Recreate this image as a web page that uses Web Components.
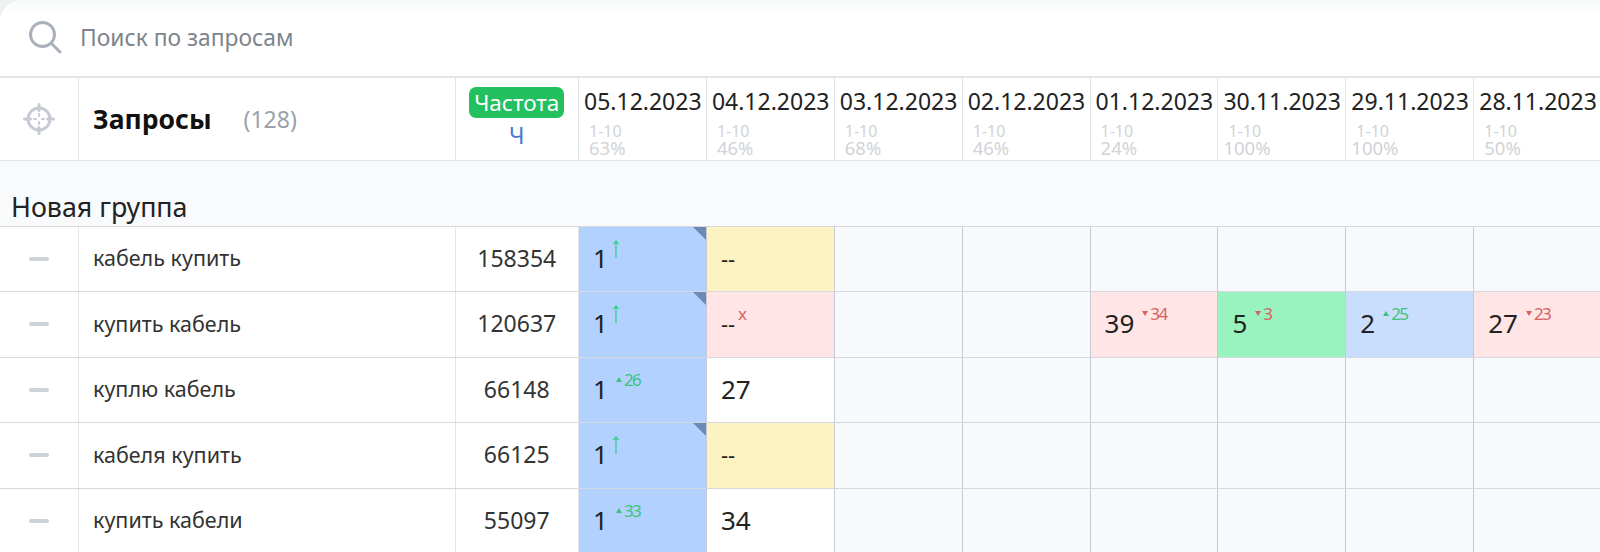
<!DOCTYPE html>
<html lang="ru">
<head>
<meta charset="utf-8">
<title>Запросы</title>
<style>
  html,body{margin:0;height:100%;overflow:hidden;background:#eef1f2}
  body{font-family:"Noto Sans","Open Sans",sans-serif;color:#222}
</style>
</head>
<body>
<rank-page>
  <search-bar placeholder="Поиск по запросам"></search-bar>
  <table-head count="128">
    <date-head date="05.12.2023" pct="63%"></date-head>
    <date-head date="04.12.2023" pct="46%"></date-head>
    <date-head date="03.12.2023" pct="68%"></date-head>
    <date-head date="02.12.2023" pct="46%"></date-head>
    <date-head date="01.12.2023" pct="24%"></date-head>
    <date-head date="30.11.2023" pct="100%"></date-head>
    <date-head date="29.11.2023" pct="100%"></date-head>
    <date-head date="28.11.2023" pct="50%"></date-head>
  </table-head>
  <group-row name="Новая группа"></group-row>
  <query-row name="кабель купить" freq="158354">
    <pos-cell tone="blue" value="1" kind="arrow" flag></pos-cell>
    <pos-cell tone="yellow" value="--"></pos-cell>
    <pos-cell></pos-cell><pos-cell></pos-cell><pos-cell></pos-cell><pos-cell></pos-cell><pos-cell></pos-cell><pos-cell></pos-cell>
  </query-row>
  <query-row name="купить кабель" freq="120637">
    <pos-cell tone="blue" value="1" kind="arrow" flag></pos-cell>
    <pos-cell tone="pink" value="--" kind="x"></pos-cell>
    <pos-cell></pos-cell><pos-cell></pos-cell>
    <pos-cell tone="pink" value="39" kind="down" delta="34"></pos-cell>
    <pos-cell tone="green" value="5" kind="down" delta="3"></pos-cell>
    <pos-cell tone="sky" value="2" kind="up" delta="25"></pos-cell>
    <pos-cell tone="pink" value="27" kind="down" delta="23"></pos-cell>
  </query-row>
  <query-row name="куплю кабель" freq="66148">
    <pos-cell tone="blue" value="1" kind="up" delta="26"></pos-cell>
    <pos-cell tone="white" value="27"></pos-cell>
    <pos-cell></pos-cell><pos-cell></pos-cell><pos-cell></pos-cell><pos-cell></pos-cell><pos-cell></pos-cell><pos-cell></pos-cell>
  </query-row>
  <query-row name="кабеля купить" freq="66125">
    <pos-cell tone="blue" value="1" kind="arrow" flag></pos-cell>
    <pos-cell tone="yellow" value="--"></pos-cell>
    <pos-cell></pos-cell><pos-cell></pos-cell><pos-cell></pos-cell><pos-cell></pos-cell><pos-cell></pos-cell><pos-cell></pos-cell>
  </query-row>
  <query-row name="купить кабели" freq="55097">
    <pos-cell tone="blue" value="1" kind="up" delta="33"></pos-cell>
    <pos-cell tone="white" value="34"></pos-cell>
    <pos-cell></pos-cell><pos-cell></pos-cell><pos-cell></pos-cell><pos-cell></pos-cell><pos-cell></pos-cell><pos-cell></pos-cell>
  </query-row>
</rank-page>
<script>
const COLS = "79px 376.5px 123.5px repeat(8,127.9px)";

class RankPage extends HTMLElement {
  constructor() {
    super();
    this.attachShadow({ mode: "open" }).innerHTML = `
      <style>
        :host{display:block;width:1600px;height:552px;overflow:hidden;background:#fff;border-top-left-radius:22px;font-family:"Noto Sans","Open Sans",sans-serif}
      </style>
      <slot></slot>`;
  }
}

class SearchBar extends HTMLElement {
  connectedCallback() {
    this.attachShadow({ mode: "open" }).innerHTML = `
      <style>
        :host{display:flex;align-items:center;height:76px;box-sizing:border-box;padding:0 0 2px 28px;background:linear-gradient(#f6fbfa,#fff 14px)}
        svg{width:34px;height:34px;flex:none;margin-right:18px}
        span{font-size:22.8px;color:#7d848c}
      </style>
      <svg viewBox="0 0 34 34" fill="none" stroke="#aab1bb" stroke-width="3" stroke-linecap="round">
        <circle cx="14.5" cy="14.5" r="12"/><path d="M23.5 23.5L32 32"/>
      </svg>
      <span>${this.getAttribute("placeholder")}</span>`;
  }
}

class TableHead extends HTMLElement {
  connectedCallback() {
    this.attachShadow({ mode: "open" }).innerHTML = `
      <style>
        :host{display:grid;grid-template-columns:${COLS};height:85px;box-sizing:border-box;border-top:2px solid #e3e5e9;border-bottom:1px solid #e3e5e9;background:#fff}
        .c{border-right:1px solid #e3e5e9;display:flex;align-items:center;box-sizing:border-box}
        .aim{justify-content:center}
        .title{padding-left:14px}
        b{font-size:26.5px;font-weight:700;color:#111}
        i{font-style:normal;font-size:23px;color:#9aa1ab;margin-left:32px}
        .freq{flex-direction:column;justify-content:flex-start;padding-top:9px}
        .badge{background:#22c05f;color:#fff;border-radius:7px;font-size:22.5px;line-height:31px;padding:0 5px;height:31px}
        .h{font-size:23px;line-height:34px;color:#4a78d0}
        ::slotted(date-head){display:block}
      </style>
      <div class="c aim">
        <svg width="32" height="32" viewBox="0 0 32 32" fill="none" stroke="#c5cad3" stroke-width="3" stroke-linecap="round">
          <circle cx="16" cy="16" r="11"/><path d="M16 1.5v6M16 24.5v6M1.5 16h6M24.5 16h6"/>
          <path d="M16 11v2M16 19v2M11 16h2M19 16h2" stroke-width="2"/>
        </svg>
      </div>
      <div class="c title"><b>Запросы</b><i>(${this.getAttribute("count")})</i></div>
      <div class="c freq"><span class="badge">Частота</span><span class="h">Ч</span></div>
      <slot></slot>`;
  }
}

class DateHead extends HTMLElement {
  connectedCallback() {
    const pct = this.getAttribute("pct");
    this.attachShadow({ mode: "open" }).innerHTML = `
      <style>
        :host{display:block;box-sizing:border-box;border-right:1px solid #e3e5e9;padding:8px 0 0 5px;overflow:hidden;white-space:nowrap}
        .d{font-size:23px;line-height:30px;color:#222}
        .s{font-size:16px;line-height:16px;color:#d0d3d8;padding-left:5px;margin-top:7px}
        .p{font-size:18.5px;line-height:17px;${pct === "100%" ? "margin-left:-5px" : ""}}
      </style>
      <div class="d">${this.getAttribute("date")}</div>
      <div class="s">1-10<div class="p">${pct}</div></div>`;
  }
}

class GroupRow extends HTMLElement {
  connectedCallback() {
    this.attachShadow({ mode: "open" }).innerHTML = `
      <style>
        :host{display:flex;align-items:flex-end;height:65.5px;box-sizing:border-box;padding:0 0 0 11px;background:#f8fafc;border-bottom:1px solid #d5d8de;font-size:26.8px;line-height:38px;color:#222}
      </style>
      ${this.getAttribute("name")}`;
  }
}

class QueryRow extends HTMLElement {
  connectedCallback() {
    this.attachShadow({ mode: "open" }).innerHTML = `
      <style>
        :host{display:grid;grid-template-columns:${COLS};height:65.5px;box-sizing:border-box;border-bottom:1px solid #d5d8de;background:#fff}
        .c{border-right:1px solid #e3e5e9;display:flex;align-items:center;box-sizing:border-box}
        .dash{justify-content:center}
        .dash u{display:block;width:20px;height:4px;border-radius:2px;background:#ced2d9}
        .name{padding:0 0 2px 14px;font-size:21.5px;color:#333}
        .freq{justify-content:center;padding-bottom:2px;font-size:23px;color:#333}
      </style>
      <div class="c dash"><u></u></div>
      <div class="c name">${this.getAttribute("name")}</div>
      <div class="c freq">${this.getAttribute("freq")}</div>
      <slot></slot>`;
  }
}

const TONES = { blue: "#b3d1ff", yellow: "#fdf3c2", pink: "#ffe5e5", green: "#98f3bf", sky: "#c9defd", white: "#fff" };

class PosCell extends HTMLElement {
  connectedCallback() {
    const tone = this.getAttribute("tone");
    const value = this.getAttribute("value") || "";
    const kind = this.getAttribute("kind");
    const delta = this.getAttribute("delta") || "";
    let mark = "";
    if (kind === "arrow") {
      mark = `<svg class="arrow" width="8" height="18" viewBox="0 0 8 18" fill="none" stroke="#3ccf8e" stroke-width="1.3"><path d="M4 18V1M1.5 4L4 1l2.5 3"/></svg>`;
    } else if (kind === "x") {
      mark = `<sup class="bad" style="margin-left:3px">x</sup>`;
    } else if (kind === "up") {
      mark = `<sup class="good"><em class="up"></em>${delta}</sup>`;
    } else if (kind === "down") {
      mark = `<sup class="bad"><em class="down"></em>${delta}</sup>`;
    }
    this.attachShadow({ mode: "open" }).innerHTML = `
      <style>
        :host{display:flex;align-items:center;position:relative;box-sizing:border-box;padding:0 0 2px 14px;border-right:1px solid #c5cad4;background:${TONES[tone] || "#f7f9fc"};white-space:nowrap;overflow:hidden}
        .v{font-size:${value === "--" ? "22px" : "26px"};color:#222}
        sup{align-self:flex-start;margin-top:12px;font-size:17px;line-height:20px;letter-spacing:-1.6px;margin-left:8px;vertical-align:baseline}
        .good{color:#3cc47c}
        .bad{color:#d9605f}
        em{display:inline-block;width:0;height:0;border-left:3.5px solid transparent;border-right:3.5px solid transparent;margin-right:2px;vertical-align:4px}
        .up{border-bottom:5px solid #3cc47c}
        .down{border-top:5px solid #d9605f}
        .arrow{align-self:flex-start;margin:13px 0 0 4px}
        .flag{position:absolute;top:0;right:0;width:0;height:0;border-top:13px solid #6d8ab5;border-left:13px solid transparent}
      </style>
      <span class="v">${value}</span>${mark}
      ${this.hasAttribute("flag") ? `<span class="flag"></span>` : ""}`;
  }
}

customElements.define("rank-page", RankPage);
customElements.define("search-bar", SearchBar);
customElements.define("table-head", TableHead);
customElements.define("date-head", DateHead);
customElements.define("group-row", GroupRow);
customElements.define("query-row", QueryRow);
customElements.define("pos-cell", PosCell);
</script>
</body>
</html>
